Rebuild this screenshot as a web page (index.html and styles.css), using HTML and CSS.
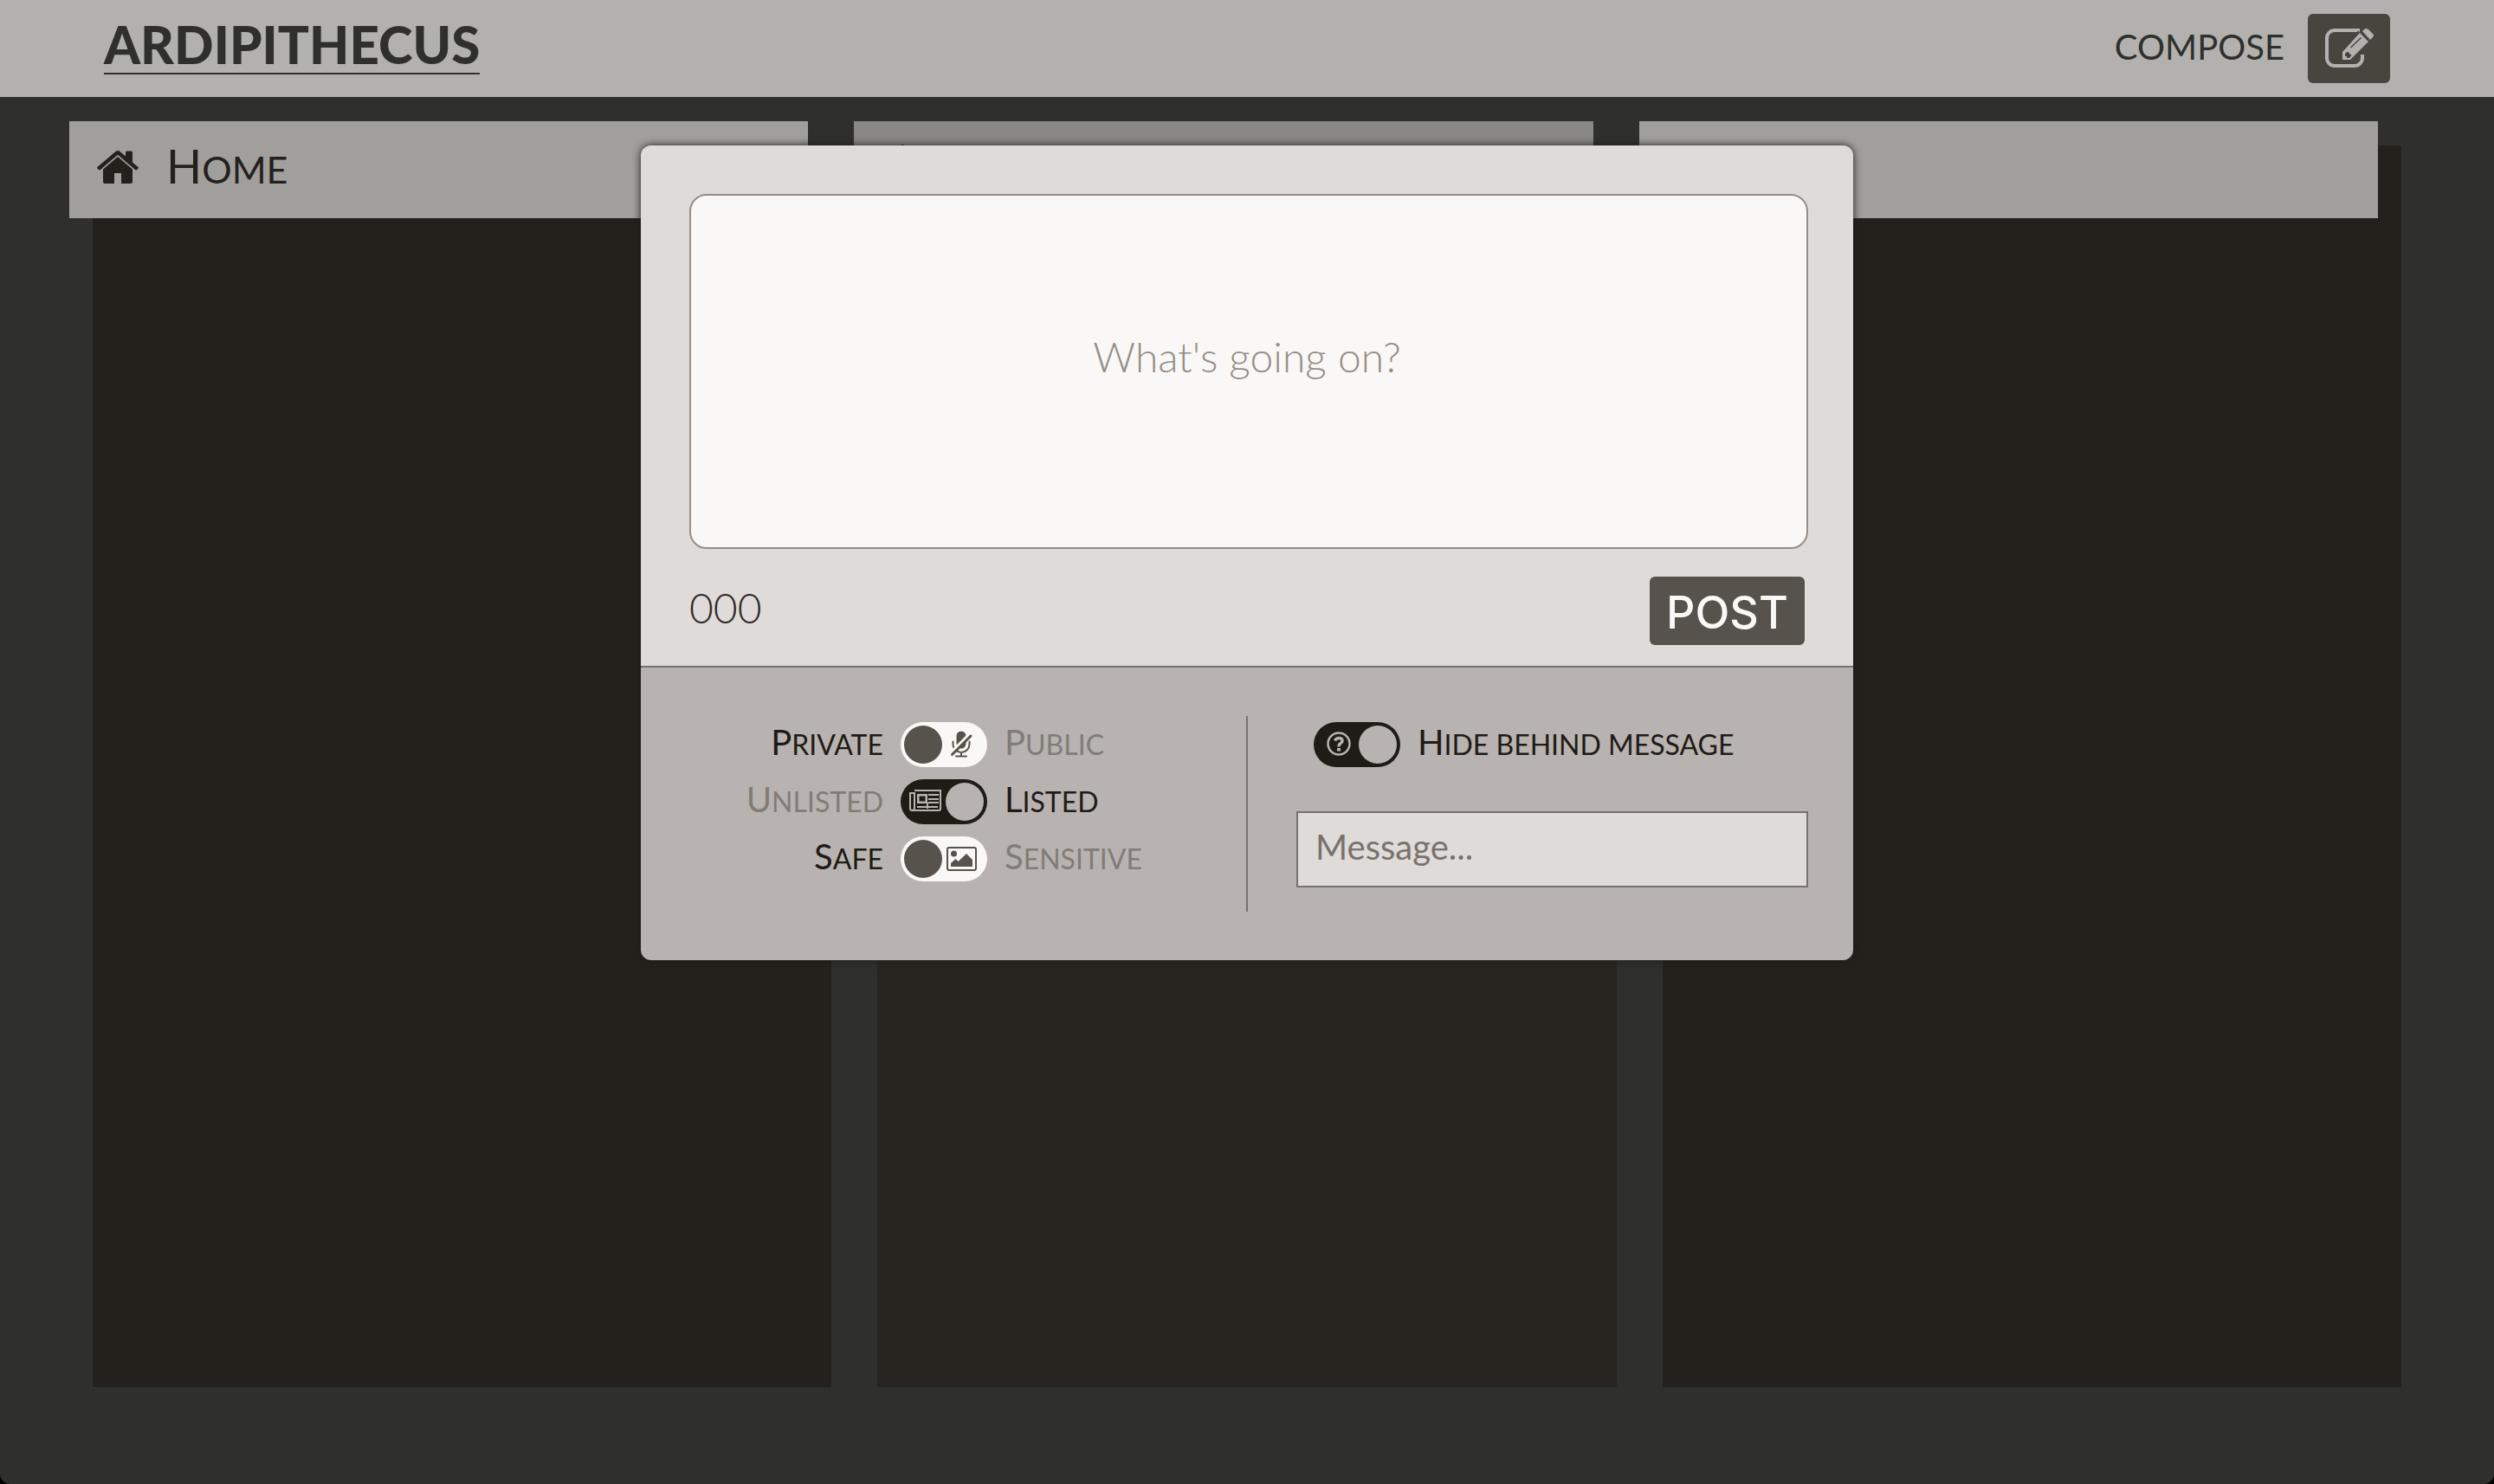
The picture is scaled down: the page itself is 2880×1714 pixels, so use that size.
FILE: index.html
```html
<!DOCTYPE html>
<html lang="en">
<head>
<meta charset="utf-8">
<title>Ardipithecus</title>
<link rel="stylesheet" href="styles.css">
</head>
<body>
<header class="topbar">
  <h1 class="brand"><a class="brand-link" href="#">ARDIPITHECUS</a></h1>
  <label class="compose-label" for="compose">COMPOSE</label>
  <button class="compose-button" id="compose" type="button">
    <svg class="compose-icon" viewBox="0 0 56 46" aria-hidden="true">
      <path d="M40 2H11a9 9 0 0 0-9 9v23a9 9 0 0 0 9 9h23a9 9 0 0 0 9-9v-4" fill="none" stroke="currentColor" stroke-width="4"/>
      <path d="M38 2.500 43 7 46 14 55 14 45 30 36 30 34 24 20 30 22 22Z" class="icon-cut"/>
      <path fill="currentColor" fill-rule="evenodd" d="M40 5 50 15 29 36h-9v-9ZM30 22.500 42 11l-1-1-12 11.500ZM23 29v3h2v2h3l2.500-3-4.500-4.500Z"/>
      <path fill="currentColor" d="m43 3 2-2q2-2 5 0l5 5q2 2 0 4l-3 3Z"/>
    </svg>
  </button>
</header>

<main class="columns">
  <section class="column">
    <h2 class="column-title">
      <svg class="column-icon" viewBox="0 0 48 38" aria-hidden="true">
        <path fill="currentColor" d="M24 7 41 21.500V36q0 2-2 2H28V26h-8v12H9q-2 0-2-2V21.500Z"/>
        <path fill="currentColor" d="M24 0q1.500 0 2.500 1L33 6.500V2q0-1.500 1.500-1.500h5Q41 .5 41 2v11.500l6 5q1.500 1 .5 2L46 22q-1 .8-2 0L24 4.700 4 22q-1 .8-2 0L.5 20.500q-1-1 .5-2L21.500 1Q22.500 0 24 0Z"/>
      </svg>
      <span class="column-name">Home</span>
    </h2>
  </section>
  <section class="column column-muted">
    <div class="column-title">
      <svg class="column-icon column-icon-tall" viewBox="0 0 48 52" aria-hidden="true">
        <path fill="currentColor" d="M24 0q2 0 2 3 13 2 13 17 0 14 8 20v3H1v-3q8-6 8-20Q9 5 22 3q0-3 2-3ZM17 45h14q-1 6-7 6t-7-6Z"/>
      </svg>
    </div>
  </section>
  <section class="column"><div class="column-title"></div></section>
</main>

<form class="composer" role="dialog" aria-label="Compose">
  <div class="composer-main">
    <textarea class="composer-text" aria-label="Post text" placeholder="What's going on?"></textarea>
    <div class="composer-actions">
      <output class="counter">000</output>
      <button class="post-button" type="button">POST</button>
    </div>
  </div>
  <div class="composer-options">
    <div class="switches">
      <div class="switch-row">
        <label class="choice choice-off" for="public">Private</label>
        <span class="switch">
          <input class="switch-input" id="public" type="checkbox">
          <svg class="switch-icon icon-right" viewBox="0 0 40 32" aria-hidden="true">
            <path fill="currentColor" d="M14.500 7a5.500 5.500 0 0 1 11 0v9a5.500 5.500 0 0 1-11 0Z"/>
            <path fill="none" stroke="currentColor" stroke-width="2" stroke-linecap="round" d="M10.500 13.500v3a9.500 9.500 0 0 0 19 0v-3M20 26v4M14 30.500h12"/>
            <path class="icon-slash-cut" d="M7 28 31 4"/>
            <path fill="none" stroke="currentColor" stroke-width="3" stroke-linecap="round" d="M9.500 28.500 31 7"/>
          </svg>
        </span>
        <label class="choice choice-on" for="public">Public</label>
      </div>
      <div class="switch-row">
        <label class="choice choice-off" for="listed">Unlisted</label>
        <span class="switch">
          <input class="switch-input" id="listed" type="checkbox" checked>
          <svg class="switch-icon icon-left" viewBox="0 0 40 32" aria-hidden="true">
            <path fill="none" stroke="currentColor" stroke-width="2" d="M7 4h30v21q0 2-2 2H4q-2 0-2-2V7h5v17q0 2-1.500 2.500"/>
            <path fill="currentColor" fill-rule="evenodd" d="M10 8h12v11H10ZM12.500 10.500v6h7v-6Z"/>
            <path fill="none" stroke="currentColor" stroke-width="2" d="M23 9h12M23 14h12M23 18h12M10 23h24M22 18v7"/>
          </svg>
        </span>
        <label class="choice choice-on" for="listed">Listed</label>
      </div>
      <div class="switch-row">
        <label class="choice choice-off" for="sensitive">Safe</label>
        <span class="switch">
          <input class="switch-input" id="sensitive" type="checkbox">
          <svg class="switch-icon icon-right" viewBox="0 0 40 32" aria-hidden="true">
            <rect x="4" y="4" width="33" height="26" rx="2" fill="none" stroke="currentColor" stroke-width="2"/>
            <circle cx="11.500" cy="11" r="3.500" fill="currentColor"/>
            <path fill="currentColor" d="M8 26v-4l5.500-5 3 3L26 11l7 7v8Z"/>
          </svg>
        </span>
        <label class="choice choice-on" for="sensitive">Sensitive</label>
      </div>
    </div>
    <div class="warning">
      <div class="warning-row">
        <span class="switch">
          <input class="switch-input" id="hide" type="checkbox" checked>
          <svg class="switch-icon icon-left" viewBox="0 0 40 32" aria-hidden="true">
            <circle cx="20" cy="16" r="12.500" fill="none" stroke="currentColor" stroke-width="2.500"/>
            <path fill="none" stroke="currentColor" stroke-width="3.500" d="M15.500 12.500Q17 9.500 20 9.500q4 0 4 3.200 0 1.800-2.200 3Q20 16.600 20 19.500"/>
            <path fill="currentColor" d="M18 21h4v3.500h-4Z"/>
          </svg>
        </span>
        <label class="choice" for="hide">Hide behind message</label>
      </div>
      <input class="warning-text" type="text" aria-label="Message" placeholder="Message...">
    </div>
  </div>
</form>
</body>
</html>
```
FILE: styles.css
```css
* { box-sizing: border-box; }

html { background: #000; }

body {
  margin: 0;
  min-height: 100vh;
  display: flex;
  flex-direction: column;
  background: #2f302b;
  color: #1f1b15;
  font-family: Lato, "Liberation Sans", sans-serif;
  font-size: 40px;
  border-radius: 0 0 12px 12px;
}

.topbar {
  display: flex;
  align-items: center;
  height: 112px;
  padding: 0 120px;
  background: #b2b1af;
  color: #2f302b;
}

.brand {
  margin: 0 auto 0 0;
  font-size: 60px;
  font-weight: 900;
  line-height: 50px;
}

.brand-link {
  display: block;
  padding-bottom: 8px;
  border-bottom: 2px solid #36302b;
  color: inherit;
  text-decoration: none;
}

.compose-label {
  margin-right: 27px;
  padding-bottom: 4px;
}

.compose-button {
  display: flex;
  align-items: center;
  justify-content: center;
  width: 95px;
  height: 80px;
  padding: 0;
  border: 0;
  border-radius: 6px;
  background: #48453f;
  color: #b2b1af;
}

.compose-icon { width: 56px; height: 46px; }

.icon-cut { fill: #48453f; }

.columns {
  flex: 1;
  display: grid;
  grid-template-columns: repeat(3, 1fr);
  gap: 53px;
  padding: 56px 107px 112px;
}

.column { background: #24211c; }

.column-muted { background: #282521; }

.column-title {
  display: flex;
  align-items: center;
  gap: 32px;
  height: 112px;
  margin: -28px 27px 0 -27px;
  padding: 0 32px;
  background: #a09f9c;
  color: #24211c;
  font-size: 43px;
  font-weight: 400;
}

.column-muted .column-title { background: #898884; }

/* Raised initial over smaller capitals */
.column-name {
  display: block;
  line-height: 112px;
  text-transform: uppercase;
}

.column-name::first-letter { font-size: 54px; line-height: 54px; }

.column-icon {
  width: 48px;
  height: 38px;
  margin-bottom: 6px;
}

.column-icon-tall { height: 52px; }

.composer {
  position: absolute;
  top: 168px;
  left: 50%;
  width: 1400px;
  margin-left: -700px;
  border-radius: 12px;
  background: #b8b3b0;
  box-shadow: 0 0 10px #1f1b15;
  overflow: hidden;
}

.composer-main {
  padding: 56px 52px 24px 56px;
  border-bottom: 2px solid #78716b;
  background: #dfdbd8;
}

.composer-text {
  display: block;
  width: 100%;
  height: 410px;
  padding: 154px 28px 154px 24px;
  border: 2px solid #968d86;
  border-radius: 20px;
  background: #f9f8f6;
  color: #1f1b15;
  font: 300 48px/64px Lato, "Liberation Sans", sans-serif;
  text-align: center;
  resize: none;
}

.composer-text::placeholder { color: #968d86; opacity: 1; }

.composer-actions {
  display: flex;
  align-items: center;
  justify-content: space-between;
  margin-top: 32px;
  padding-right: 4px;
}

.counter {
  padding-bottom: 8px;
  color: #2f2b27;
  font-size: 48px;
  font-weight: 300;
}

.post-button {
  width: 179px;
  height: 79px;
  padding: 4px 0 0;
  border: 0;
  border-radius: 6px;
  background: #57524b;
  color: #f9f8f6;
  font: 500 52px/64px Inter, "Liberation Sans", sans-serif;
}

.composer-options {
  display: grid;
  grid-template-columns: calc(50% - 1px) 1fr;
  padding: 56px 52px 56px 56px;
}

.switches {
  display: flex;
  flex-direction: column;
  gap: 14px;
  height: 226px;
  padding-top: 7px;
  border-right: 2px solid #78716b;
}

.switch-row {
  display: grid;
  grid-template-columns: 224px 100px 1fr;
  align-items: center;
  column-gap: 20px;
  height: 52px;
}

.choice {
  display: block;
  font-size: 32px;
  line-height: 52px;
  text-transform: uppercase;
  white-space: nowrap;
}

.choice::first-letter { font-size: 40px; line-height: 40px; }

.choice-off { text-align: right; }

.switch-row:has(.switch-input:checked) .choice-off,
.switch-row:has(.switch-input:not(:checked)) .choice-on { color: #827c77; }

.switch {
  position: relative;
  display: block;
  width: 100px;
  height: 52px;
}

.switch-input {
  display: flex;
  width: 100px;
  height: 52px;
  margin: 0;
  padding: 4px;
  border-radius: 26px;
  background: #f9f8f6;
  appearance: none;
}

.switch-input::before {
  content: "";
  width: 44px;
  height: 44px;
  border-radius: 50%;
  background: #57524b;
}

.switch-input:checked {
  justify-content: flex-end;
  background: #1f1b15;
}

.switch-input:checked::before { background: #b8b3b0; }

.switch-icon {
  position: absolute;
  top: 9px;
  width: 40px;
  height: 32px;
  pointer-events: none;
}

.icon-left { left: 9px; color: #b8b3b0; }

.icon-right { right: 10px; color: #57524b; }

.icon-slash-cut { fill: none; stroke: #f9f8f6; stroke-width: 4; }

.warning { padding: 7px 0 0 56px; }

.warning-row {
  display: flex;
  align-items: center;
  gap: 20px;
  padding-left: 20px;
}

.warning-text {
  display: block;
  width: 100%;
  height: 88px;
  margin-top: 51px;
  padding: 0 20px 6px;
  border: 2px solid #78716b;
  background: #dfdbd8;
  color: #1f1b15;
  font: 400 40px Lato, "Liberation Sans", sans-serif;
}

.warning-text::placeholder { color: #78736d; opacity: 1; }
```
